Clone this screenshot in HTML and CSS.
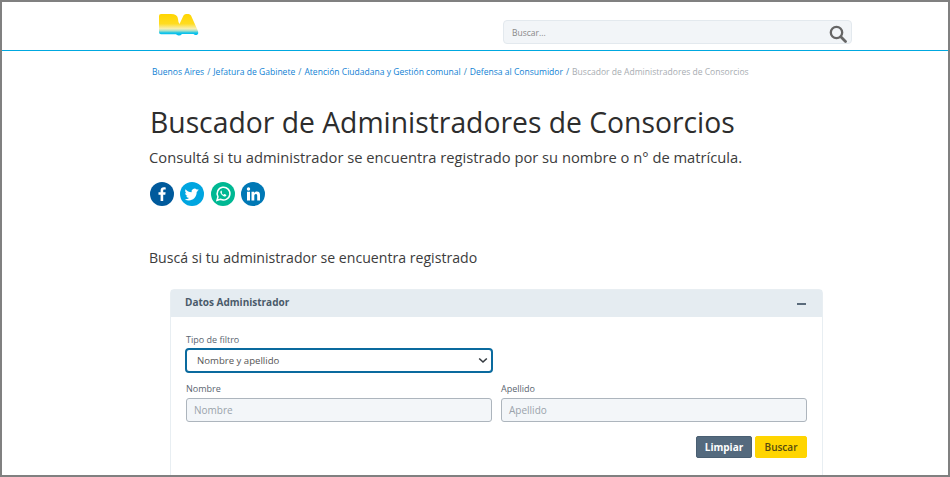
FILE: index.html
```html
<!DOCTYPE html>
<html lang="es">
<head>
<meta charset="utf-8">
<title>Buscador de Administradores de Consorcios</title>
<link rel="stylesheet" href="styles.css">
</head>
<body>
<div class="frame">
  <header class="topbar">
    <div class="topbar-inner">
      <svg class="logo" width="40" height="22" viewBox="0 0 40 22" aria-label="BA">
        <defs>
          <linearGradient id="bagrad" x1="0" y1="0" x2="0" y2="1">
            <stop offset="0" stop-color="#ffd500"/>
            <stop offset="0.45" stop-color="#ffdc20"/>
            <stop offset="0.68" stop-color="#f7eeb0"/>
            <stop offset="0.78" stop-color="#a8e0c8"/>
            <stop offset="0.88" stop-color="#10c4ea"/>
            <stop offset="1" stop-color="#00b8ee"/>
          </linearGradient>
        </defs>
        <path fill="url(#bagrad)" d="M0 2 Q0 0 2 0 H12 Q18.500 0 19 5 Q19 7.500 20.500 10 L24.500 1.500 Q25.300 0 27 0 H29.500 Q31 0 32 1.500 L38.500 16 Q40 19.500 38.500 20.500 Q37 21.500 35.500 20.800 L34.500 20 H23 Q21.500 21.800 19.500 21.500 Q17.800 21 17 20.300 H2 Q0 20.300 0 18.300 Z"/>
      </svg>
      <form class="search">
        <span class="search-text">Buscar...</span>
        <svg class="search-icon" width="18" height="18" viewBox="0 0 18 18">
          <circle cx="7.500" cy="7.500" r="5.700" fill="none" stroke="#666" stroke-width="2.300"/>
          <path d="M11.800 11.800 L16.500 16.500" stroke="#666" stroke-width="2.800" stroke-linecap="round"/>
        </svg>
      </form>
    </div>
  </header>
  <main class="content">
    <nav class="crumbs">
      <a>Buenos Aires</a><span class="sep">/</span><a>Jefatura de Gabinete</a><span class="sep">/</span><a>Atención Ciudadana y Gestión comunal</a><span class="sep">/</span><a>Defensa al Consumidor</a><span class="sep">/</span><span class="current">Buscador de Administradores de Consorcios</span>
    </nav>
    <h1 class="title">Buscador de Administradores de Consorcios</h1>
    <p class="lead">Consultá si tu administrador se encuentra registrado por su nombre o n° de matrícula.</p>
    <div class="social">
      <span class="soc soc-fb"><svg width="24" height="24" viewBox="0 0 24 24"><path fill="#fff" d="M13.200 19V12.800H15.300L15.600 10.300H13.200V8.800C13.200 8.100 13.400 7.600 14.400 7.600H15.700V5.400C15.400 5.400 14.700 5.300 13.800 5.300 11.900 5.300 10.600 6.500 10.600 8.500V10.300H8.500V12.800H10.600V19Z"/></svg></span>
      <span class="soc soc-tw"><svg width="24" height="24" viewBox="0 0 24 24"><path fill="#fff" d="M19 8c-.5.2-1.100.4-1.700.5.600-.4 1.100-1 1.300-1.600-.6.300-1.200.6-1.900.7a3 3 0 0 0-5.100 2.700C9.100 10.200 7 9.100 5.600 7.300c-.8 1.400-.4 3.100.9 4-.5 0-.9-.1-1.300-.4 0 1.500 1 2.700 2.400 3-.4.100-.9.100-1.300.1.400 1.200 1.500 2 2.800 2a6 6 0 0 1-4.400 1.200c4.800 3 11.900.4 12-7.100.6-.5 1-1 1.300-1.600z"/></svg></span>
      <span class="soc soc-wa"><svg width="24" height="24" viewBox="0 0 24 24"><path fill="none" stroke="#fff" stroke-width="1.500" d="M6 18.300l1-3.500a6.400 6.400 0 1 1 2.400 2.400z"/><path fill="#fff" d="M10 8.700c-.8.600-.9 1.700-.2 2.900.8 1.400 2 2.400 3.400 2.800.9.200 1.800-.2 2.100-1 .1-.4 0-.6-.3-.7l-1.200-.6c-.3-.1-.4 0-.6.200l-.4.500c-.9-.3-1.700-1-2.200-1.900l.4-.5c.1-.2.100-.3 0-.5l-.5-1.100c-.1-.3-.3-.4-.5-.4z"/></svg></span>
      <span class="soc soc-in"><svg width="24" height="24" viewBox="0 0 24 24"><circle cx="7.500" cy="7" r="1.700" fill="#fff"/><path fill="#fff" d="M6 9.800H9V18.500H6ZM10.500 9.800H13.200V11C13.700 10.200 14.600 9.600 15.800 9.600 18.400 9.600 19 11.200 19 13.300V18.500H16.200V13.800C16.200 12.800 16 11.900 14.900 11.900 13.800 11.900 13.300 12.700 13.300 13.800V18.500H10.500Z"/></svg></span>
    </div>
    <h2 class="section-title">Buscá si tu administrador se encuentra registrado</h2>
    <section class="panel">
      <div class="panel-head">
        <span class="panel-title">Datos Administrador</span>
        <span class="panel-toggle"></span>
      </div>
      <div class="panel-body">
        <div class="field field-half">
          <label class="label">Tipo de filtro</label>
          <div class="select">
            <span>Nombre y apellido</span>
            <svg width="10" height="7" viewBox="0 0 10 7"><path d="M1.200 1.500 L5 5 L8.800 1.500" fill="none" stroke="#343a40" stroke-width="1.600"/></svg>
          </div>
        </div>
        <div class="row">
          <div class="field">
            <label class="label">Nombre</label>
            <div class="input">Nombre</div>
          </div>
          <div class="field">
            <label class="label">Apellido</label>
            <div class="input">Apellido</div>
          </div>
        </div>
        <div class="actions">
          <button class="btn btn-clear" type="button">Limpiar</button>
          <button class="btn btn-search" type="button">Buscar</button>
        </div>
      </div>
    </section>
  </main>
</div>
</body>
</html>
```
FILE: styles.css
```css
* { box-sizing: border-box; }
html, body { margin: 0; padding: 0; }
body { font-family: "Open Sans", "Liberation Sans", sans-serif; background: #fff; color: #333; }
.frame { width: 950px; height: 477px; border: 2px solid #808080; overflow: hidden; background: #fff; }
.topbar { height: 49px; border-bottom: 1px solid #00a8e0; }
.topbar-inner { display: flex; justify-content: space-between; align-items: flex-start; padding: 11px 96px 0 157px; }
.logo { display: block; margin-top: 1px; }
.search { display: flex; align-items: center; justify-content: space-between; width: 349px; height: 24px; margin-top: 7px; padding: 0 4px 0 8px; background: #f2f5f8; border: 1px solid #e3e9ee; border-radius: 4px; }
.search-text { font-size: 8.500px; color: #888; }
.search-icon { margin-top: 3px; }
.content { padding: 15px 0 0 148px; }
.crumbs { font-size: 8.550px; line-height: 12px; padding-left: 2px; color: #0f7fd4; white-space: nowrap; }
.sep { margin: 0 3px; color: #2b7fc0; }
.current { color: #a8adb2; }
.title { margin: 24px 0 0; font-size: 28.300px; line-height: 40px; font-weight: 400; color: #2d2d2d; white-space: nowrap; }
.lead { margin: 4px 0 0 -1px; font-size: 14.720px; line-height: 22px; color: #3c3c3c; white-space: nowrap; }
.social { display: flex; gap: 6.300px; margin-top: 14px; }
.soc { display: block; width: 24px; height: 24px; border-radius: 50%; }
.soc svg { display: block; }
.soc-fb { background: #005a9c; }
.soc-tw { background: #00a5e0; }
.soc-wa { background: #00b893; }
.soc-in { background: #0078b5; }
.section-title { margin: 41px 0 0 -1px; font-size: 14.140px; line-height: 22px; font-weight: 400; color: #3c3c3c; white-space: nowrap; }
.panel { width: 653px; height: 200px; margin: 20px 0 0 20px; border: 1px solid #e8eef2; border-radius: 4px 4px 0 0; }
.panel-head { display: flex; justify-content: space-between; align-items: center; height: 27px; padding: 0 16px 0 14px; background: #e5ecf1; }
.panel-title { margin-bottom: 3px; font-size: 10px; font-weight: 700; color: #4a5a6a; }
.panel-toggle { width: 9px; height: 2px; margin-top: 1px; background: #5a6b7b; }
.panel-body { padding: 17px 15px 0; }
.label { display: block; font-size: 9px; line-height: 12px; color: #5a6570; }
.field { flex: 1; min-width: 0; }
.field-half { width: 307px; }
.select { display: flex; justify-content: space-between; align-items: center; height: 25px; margin: 2px 0 0 -1px; padding: 0 2px 0 10px; border: 2px solid #0a6a9e; border-radius: 4px; font-size: 9.600px; color: #555; background: #fff; }
.select svg { margin-right: 1px; }
.row { display: flex; gap: 9px; margin-top: 10px; }
.input { height: 24px; margin-top: 3px; padding-left: 7px; line-height: 22px; border: 1px solid #adb5bd; border-radius: 3px; background: #f3f6f9; font-size: 10px; color: #9aa3ab; }
.actions { display: flex; justify-content: flex-end; gap: 3px; margin-top: 14px; }
.btn { height: 22px; border-radius: 2px; font-family: inherit; font-size: 10px; font-weight: 600; padding: 0; }
.btn-clear { width: 56px; background: #546a7e; border: 1px solid #4a5f72; color: #fff; font-weight: 700; }
.btn-search { width: 52px; background: #ffd500; border: 1px solid #ffd500; color: #554a10; }
```
